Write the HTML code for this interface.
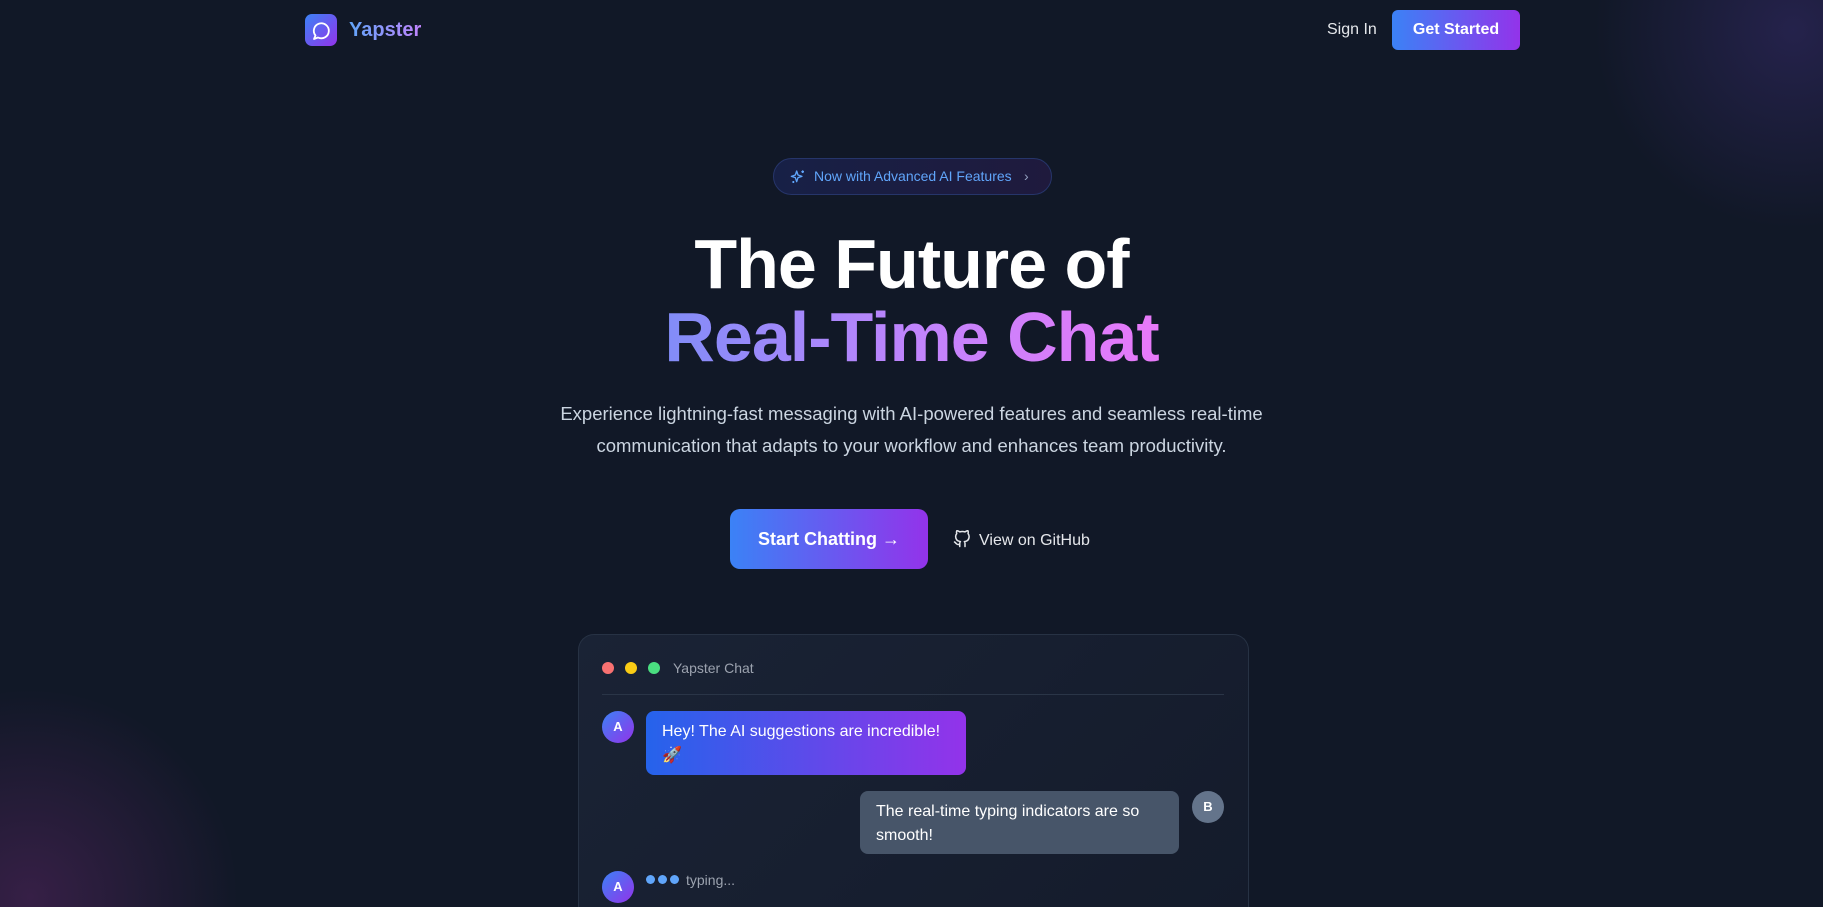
<!DOCTYPE html>
<html><head><meta charset="utf-8"><style>
*{margin:0;padding:0;box-sizing:border-box}
html,body{width:1823px;height:907px;overflow:hidden}
body{background:#111827;font-family:"Liberation Sans",sans-serif;color:#fff;position:relative}
.glow1{position:absolute;right:-170px;top:-170px;width:400px;height:400px;border-radius:50%;background:radial-gradient(circle,rgba(88,60,170,.28),rgba(88,60,170,0) 70%)}
.glow2{position:absolute;left:-180px;bottom:-200px;width:420px;height:420px;border-radius:50%;background:radial-gradient(circle,rgba(150,50,150,.28),rgba(150,50,150,0) 70%)}
.abs{position:absolute}
.logo{left:305px;top:14px;width:32px;height:32px;border-radius:7px;background:linear-gradient(135deg,#3b82f6,#9333ea)}
.brand{left:349px;top:19px;font-size:20px;font-weight:700;background:linear-gradient(90deg,#60a5fa,#c084fc);-webkit-background-clip:text;color:transparent}
.signin{left:1327px;top:21px;font-size:16px;color:#e5e7eb}
.gs{left:1392px;top:10px;width:128px;height:40px;border-radius:6px;background:linear-gradient(90deg,#3b82f6,#9333ea);font-size:16px;line-height:40px;text-align:center;font-weight:600}
.badge{left:773px;top:158px;width:279px;height:37px;border-radius:19px;border:1px solid #26356a;background:linear-gradient(90deg,#172046,#1f1a3d);color:#60a5fa;font-size:14px;line-height:35px;padding-left:40px}
h1{position:absolute;left:0;width:1823px;text-align:center;font-size:70px;font-weight:700;letter-spacing:-1px}
.l2{background:linear-gradient(90deg,#818cf8,#c084fc,#e879f9);-webkit-background-clip:text;color:transparent;display:inline-block}
.p{left:0;width:1823px;top:398px;text-align:center;font-size:18.5px;line-height:32px;color:#cbd5e1}
.btn{left:730px;top:509px;width:198px;height:60px;border-radius:10px;background:linear-gradient(90deg,#3b82f6,#9333ea);font-size:18px;font-weight:700;line-height:60px;text-align:center}
.gh{left:953px;top:530px;font-size:16px;color:#e5e7eb;line-height:20px}
.card{left:578px;top:634px;width:671px;height:273px;border-radius:16px 16px 0 0;border:1px solid #273244;border-bottom:none;background:linear-gradient(135deg,#1a2335,#141b2b)}
.dot{width:12px;height:12px;border-radius:50%;top:662px}
.av{width:32px;height:32px;border-radius:50%;font-size:13px;font-weight:700;text-align:center;line-height:32px}
.bub{font-size:16px;line-height:24px;padding:9px 16px;border-radius:8px}
</style></head><body>
<div class="glow1"></div><div class="glow2"></div>
<div class="abs logo"><svg width="32" height="32" viewBox="0 0 32 32"><path d="M10.5 21.5l-1.5 3.5 4-1.5a7.5 7.5 0 1 0-2.5-2z" fill="none" stroke="#fff" stroke-width="1.8" stroke-linejoin="round"/></svg></div>
<div class="abs brand">Yapster</div>
<div class="abs signin">Sign In</div>
<div class="abs gs">Get Started</div>
<div class="abs badge"><svg class="abs" style="left:16px;top:10px" width="16" height="16" viewBox="0 0 24 24" fill="none" stroke="#60a5fa" stroke-width="2" stroke-linejoin="round"><path d="M10 3l2 6 6 2-6 2-2 6-2-6-6-2 6-2z"/><path d="M19 2v4M17 4h4M5 18v3M3.5 19.5h3"/></svg>Now with Advanced AI Features<span style="position:absolute;left:250px;top:0;color:#93a0c0">›</span></div>
<h1 style="top:224px">The Future of</h1>
<h1 style="top:297px"><span class="l2">Real-Time Chat</span></h1>
<div class="abs p">Experience lightning-fast messaging with AI-powered features and seamless real-time<br>communication that adapts to your workflow and enhances team productivity.</div>
<div class="abs btn">Start Chatting →</div>
<div class="abs gh"><svg style="vertical-align:-3px;margin-right:8px" width="18" height="18" viewBox="0 0 24 24" fill="none" stroke="#e5e7eb" stroke-width="2" stroke-linecap="round" stroke-linejoin="round"><path d="M9 19c-5 1.5-5-2.5-7-3m14 6v-3.9a3.4 3.4 0 0 0-.9-2.6c3.1-.3 6.4-1.5 6.4-7A5.4 5.4 0 0 0 20 4.8 5 5 0 0 0 19.900 1S18.7.7 16 2.5a13.4 13.4 0 0 0-7 0C6.3.7 5.1 1 5.1 1A5 5 0 0 0 5 4.8a5.4 5.4 0 0 0-1.5 3.7c0 5.4 3.300 6.6 6.4 7a3.4 3.4 0 0 0-.9 2.6V22"/></svg>View on GitHub</div>
<div class="abs card"></div>
<div class="abs dot" style="left:602px;background:#f87171"></div>
<div class="abs dot" style="left:625px;background:#facc15"></div>
<div class="abs dot" style="left:648px;background:#4ade80"></div>
<div class="abs" style="left:673px;top:660px;font-size:14px;color:#9ca3af">Yapster Chat</div>
<div class="abs" style="left:602px;top:694px;width:622px;height:1px;background:#2a3547"></div>
<div class="abs av" style="left:602px;top:711px;background:linear-gradient(135deg,#3b82f6,#9333ea)">A</div>
<div class="abs bub" style="left:646px;top:711px;width:320px;height:64px;background:linear-gradient(90deg,#2563eb,#9333ea)">Hey! The AI suggestions are incredible!<br>🚀</div>
<div class="abs bub" style="left:860px;top:791px;width:319px;height:63px;background:#475569">The real-time typing indicators are so smooth!</div>
<div class="abs av" style="left:1192px;top:791px;background:#64748b">B</div>
<div class="abs av" style="left:602px;top:871px;background:linear-gradient(135deg,#3b82f6,#9333ea)">A</div>
<div class="abs" style="left:646px;top:875px;width:9px;height:9px;border-radius:50%;background:#60a5fa"></div>
<div class="abs" style="left:658px;top:875px;width:9px;height:9px;border-radius:50%;background:#60a5fa"></div>
<div class="abs" style="left:670px;top:875px;width:9px;height:9px;border-radius:50%;background:#60a5fa"></div>
<div class="abs" style="left:686px;top:872px;font-size:14px;color:#9ca3af">typing...</div>
</body></html>
